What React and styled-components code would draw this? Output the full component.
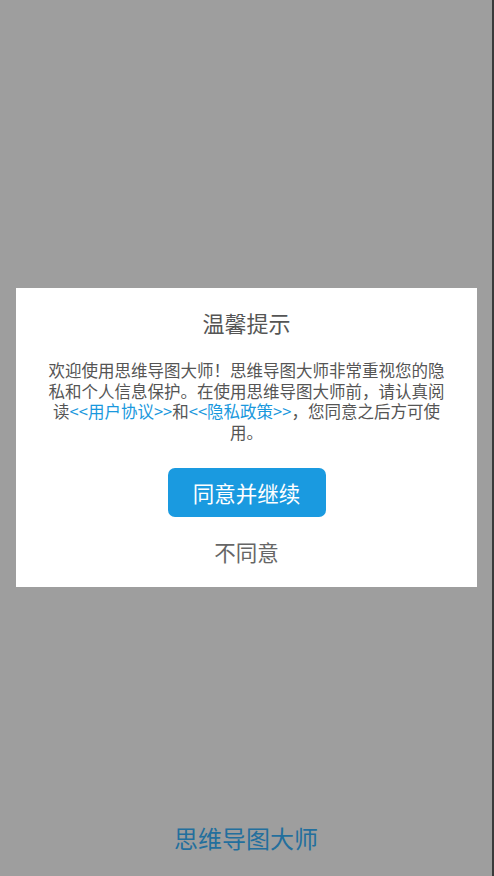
import React from "react";
import styled, { createGlobalStyle } from "styled-components";

const Global = createGlobalStyle`
  html, body { margin: 0; padding: 0; }
  body {
    background: #9e9e9e;
    font-family: "Noto Sans CJK SC", "Noto Sans", sans-serif;
  }
`;

const Splash = styled.div`
  height: 876px;
  box-sizing: border-box;
  display: flex;
  flex-direction: column;
  justify-content: flex-end;
  align-items: center;
  background: #9e9e9e;
  border-right: 2px solid #3a3a3a;
  padding-bottom: 21px;
`;

const AppName = styled.div`
  font-size: 24px;
  line-height: 34px;
  color: #236f9d;
`;

const Overlay = styled.div`
  position: fixed;
  inset: 0;
  display: flex;
  align-items: flex-start;
  justify-content: flex-start;
  padding: 288px 0 0 16px;
`;

const Dialog = styled.div`
  width: 461px;
  box-sizing: border-box;
  background: #fff;
  padding: 19px 30px 20px;
  display: flex;
  flex-direction: column;
  align-items: center;
`;

const Title = styled.div`
  font-size: 22px;
  line-height: 30px;
  color: #555;
`;

const Body = styled.p`
  margin: 23px 0 0;
  font-size: 16.5px;
  line-height: 20.5px;
  color: #555;
  text-align: center;
`;

const Link = styled.span`
  color: #1a98dd;
`;

const Primary = styled.button`
  margin-top: 26px;
  width: 158px;
  height: 49px;
  border: none;
  border-radius: 7px;
  background: #1a9ae0;
  color: #fff;
  font-family: inherit;
  font-size: 21.5px;
  padding: 0;
  cursor: pointer;
`;

const Secondary = styled.button`
  margin-top: 20px;
  border: none;
  background: none;
  padding: 0;
  font-family: inherit;
  font-size: 21.5px;
  line-height: 30px;
  color: #666;
  cursor: pointer;
`;

export default function App() {
  return (
    <>
      <Global />
      <Splash>
        <AppName>思维导图大师</AppName>
      </Splash>
      <Overlay>
        <Dialog>
          <Title>温馨提示</Title>
          <Body>
            欢迎使用思维导图大师！思维导图大师非常重视您的隐私和个人信息保护。在使用思维导图大师前，请认真阅读
            <Link>&lt;&lt;用户协议&gt;&gt;</Link>和<Link>&lt;&lt;隐私政策&gt;&gt;</Link>，您同意之后方可使用。
          </Body>
          <Primary>同意并继续</Primary>
          <Secondary>不同意</Secondary>
        </Dialog>
      </Overlay>
    </>
  );
}
